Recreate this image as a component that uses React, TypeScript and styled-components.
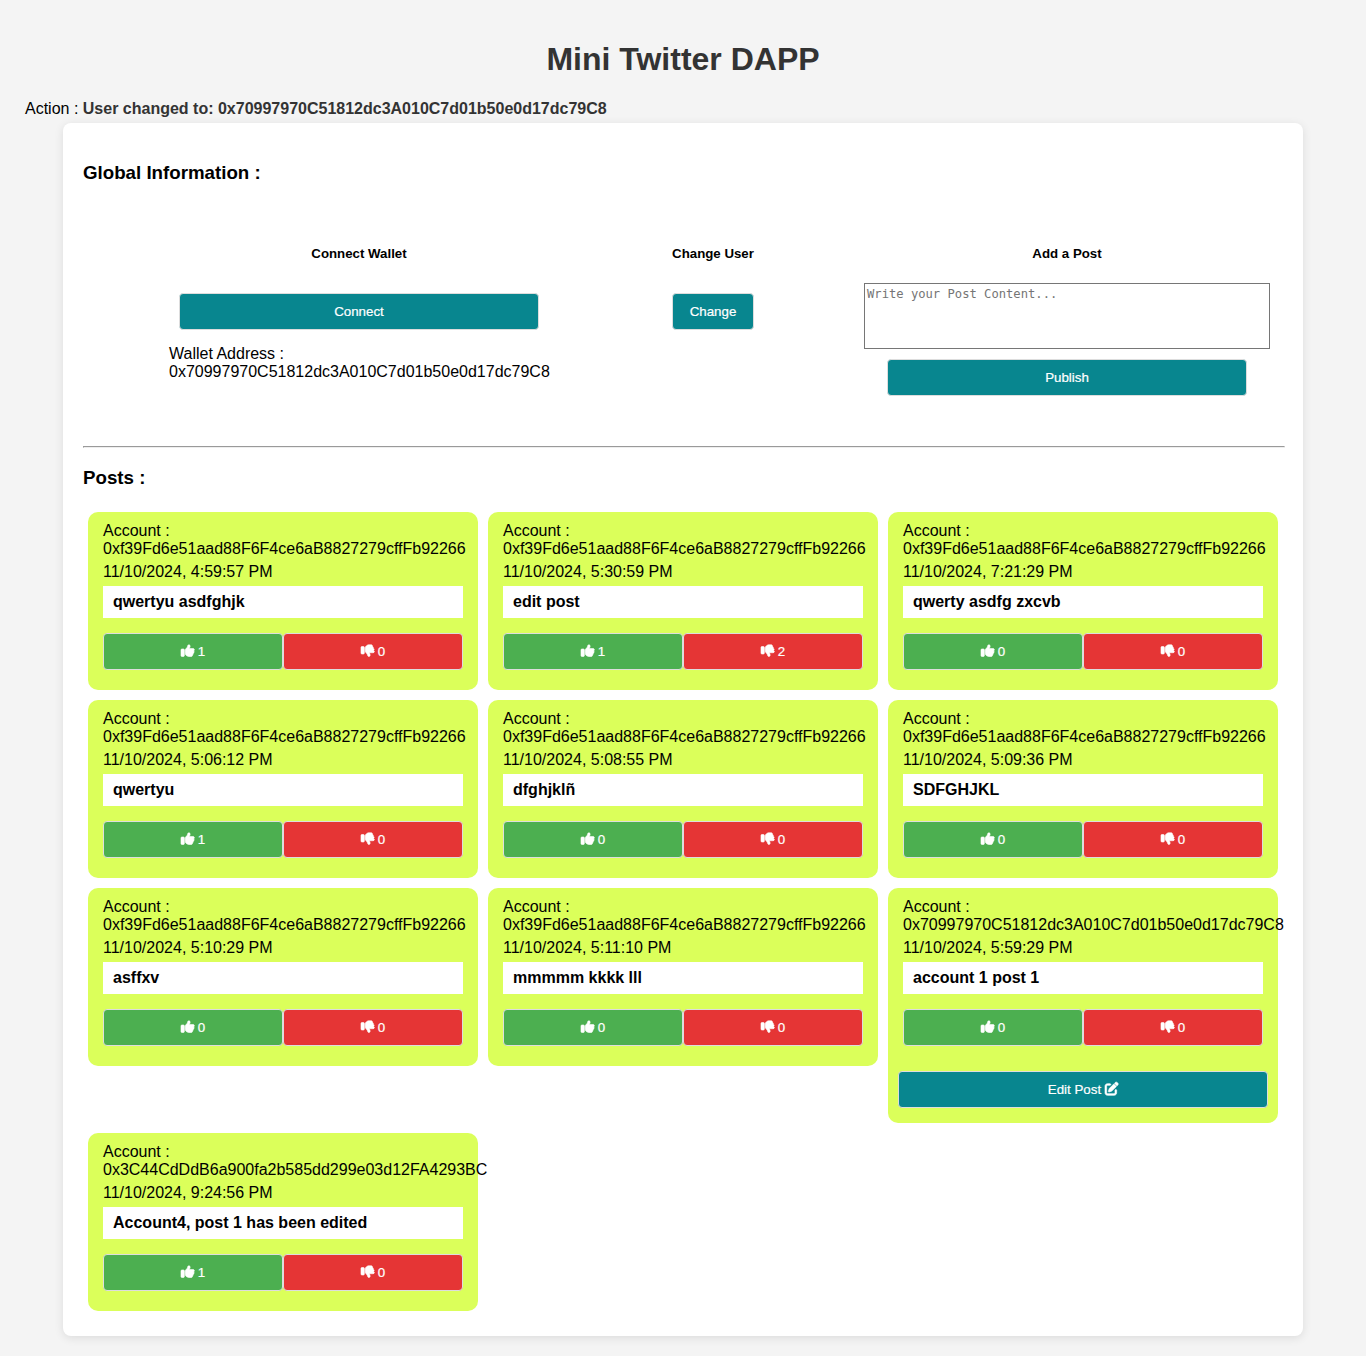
import React from "react";
import styled, { createGlobalStyle } from "styled-components";
import { FaThumbsUp, FaThumbsDown, FaPenToSquare } from "react-icons/fa6";

const GlobalStyle = createGlobalStyle`
  * { box-sizing: border-box; }
  body {
    margin: 0;
    background: #f4f4f4;
    color: #000;
    font: 16px/18px Arial, "Liberation Sans", sans-serif;
  }
`;

const Page = styled.div`
  padding: 20px;
`;

const Title = styled.h1`
  margin: 21px 0 22px;
  color: #333;
  font-size: 32px;
  line-height: 37px;
  text-align: center;
`;

const Status = styled.p`
  margin: 0 5px 5px;
  strong { color: #333; }
`;

const Panel = styled.main`
  width: 1240px;
  margin: 0 auto;
  padding: 39px 20px 25px;
  border-radius: 8px;
  background: #fff;
  box-shadow: 0 2px 10px rgba(0, 0, 0, 0.1);
`;

const SectionTitle = styled.h3`
  margin: 0;
  font-size: 18.72px;
  line-height: 22px;
`;

const Actions = styled.section`
  display: flex;
  height: 262px;
  padding: 62px 0 0 86px;
`;

const Action = styled.div<{ $width: number; $gap?: number }>`
  display: flex;
  flex-direction: column;
  align-items: center;
  width: ${(p) => p.$width}px;
  margin-right: ${(p) => p.$gap ?? 0}px;
`;

const ActionTitle = styled.h5`
  margin: 0 0 21px;
  font-size: 13.28px;
  line-height: 16px;
  white-space: nowrap;
`;

const tones = { teal: "#08868f", green: "#4caf50", red: "#e53535" };

const Button = styled.button<{ $tone?: keyof typeof tones; $width?: string; $top?: number }>`
  flex: none;
  width: ${(p) => p.$width ?? "auto"};
  height: 37px;
  margin: ${(p) => p.$top ?? 0}px 0 0;
  padding: 0 16px;
  border: 1px solid #ddd;
  border-radius: 4px;
  background: ${(p) => tones[p.$tone ?? "teal"]};
  color: #fff;
  font: 500 13.333px/15px Arial, "Liberation Sans", sans-serif;
  -webkit-text-stroke: 0.2px #fff;
  white-space: nowrap;
  cursor: pointer;
  svg {
    overflow: visible;
    vertical-align: -0.125em;
    stroke: #fff;
    stroke-width: 24px;
  }
`;

const Wallet = styled.p`
  align-self: flex-start;
  margin: 15px 0 0;
`;

const PostInput = styled.textarea`
  flex: none;
  width: 406px;
  height: 66px;
  margin-bottom: 10px;
  padding: 2px;
  border: 1px solid #767676;
  border-radius: 0;
  font: 12.17px/16px Consolas, "DejaVu Sans Mono", monospace;
  resize: none;
  &::placeholder { color: #757575; }
`;

const Divider = styled.hr`
  width: 1202px;
  height: 2px;
  margin: 0 0 19px;
  border: 1px inset #eee;
`;

const Posts = styled.section`
  display: grid;
  grid-template-columns: repeat(3, 390px);
  align-items: start;
  gap: 10px;
  padding: 23px 5px 0;
`;

const Card = styled.article`
  display: flex;
  flex-direction: column;
  padding: 10px 10px 15px;
  border-radius: 10px;
  background: #dbff5a;
`;

const CardBody = styled.div`
  padding: 0 5px 5px;
`;

const Account = styled.div`
  white-space: nowrap;
`;

const PostDate = styled.div`
  margin: 5px 0;
`;

const Content = styled.div`
  padding: 7px 10px;
  background: #fff;
  font-weight: bold;
`;

const Votes = styled.div`
  display: grid;
  grid-template-columns: 1fr 1fr;
  margin-top: 15px;
`;

type Post = { account?: string; time: string; text: string; up: number; down: number; own?: boolean };

const OWNER = "0xf39Fd6e51aad88F6F4ce6aB8827279cffFb92266";
const USER = "0x70997970C51812dc3A010C7d01b50e0d17dc79C8";

const posts: Post[] = [
  { time: "4:59:57", text: "qwertyu asdfghjk", up: 1, down: 0 },
  { time: "5:30:59", text: "edit post", up: 1, down: 2 },
  { time: "7:21:29", text: "qwerty asdfg zxcvb", up: 0, down: 0 },
  { time: "5:06:12", text: "qwertyu", up: 1, down: 0 },
  { time: "5:08:55", text: "dfghjklñ", up: 0, down: 0 },
  { time: "5:09:36", text: "SDFGHJKL", up: 0, down: 0 },
  { time: "5:10:29", text: "asffxv", up: 0, down: 0 },
  { time: "5:11:10", text: "mmmmm kkkk lll", up: 0, down: 0 },
  { account: USER, time: "5:59:29", text: "account 1 post 1", up: 0, down: 0, own: true },
  { account: "0x3C44CdDdB6a900fa2b585dd299e03d12FA4293BC", time: "9:24:56", text: "Account4, post 1 has been edited", up: 1, down: 0 },
];

function PostCard({ post }: { post: Post }) {
  return (
    <Card>
      <CardBody>
        <Account>Account :<br />{post.account ?? OWNER}</Account>
        <PostDate>11/10/2024, {post.time} PM</PostDate>
        <Content>{post.text}</Content>
        <Votes>
          <Button $tone="green"><FaThumbsUp /> {post.up}</Button>
          <Button $tone="red"><FaThumbsDown /> {post.down}</Button>
        </Votes>
      </CardBody>
      {post.own ? <Button $width="370px" $top={20}>Edit Post <FaPenToSquare /></Button> : null}
    </Card>
  );
}

export default function App() {
  return (
    <Page>
      <GlobalStyle />
      <Title>Mini Twitter DAPP</Title>
      <Status>Action : <strong>User changed to: {USER}</strong></Status>
      <Panel>
        <SectionTitle>Global Information :</SectionTitle>
        <Actions>
          <Action $width={380} $gap={123}>
            <ActionTitle>Connect Wallet</ActionTitle>
            <Button $width="360px" $top={10}>Connect</Button>
            <Wallet>Wallet Address :<br />{USER}</Wallet>
          </Action>
          <Action $width={82} $gap={110}>
            <ActionTitle>Change User</ActionTitle>
            <Button $width="82px" $top={10}>Change</Button>
          </Action>
          <Action $width={406}>
            <ActionTitle>Add a Post</ActionTitle>
            <PostInput placeholder="Write your Post Content..." />
            <Button $width="360px">Publish</Button>
          </Action>
        </Actions>
        <Divider />
        <SectionTitle>Posts :</SectionTitle>
        <Posts>
          {posts.map((post) => (
            <PostCard key={post.time} post={post} />
          ))}
        </Posts>
      </Panel>
    </Page>
  );
}
